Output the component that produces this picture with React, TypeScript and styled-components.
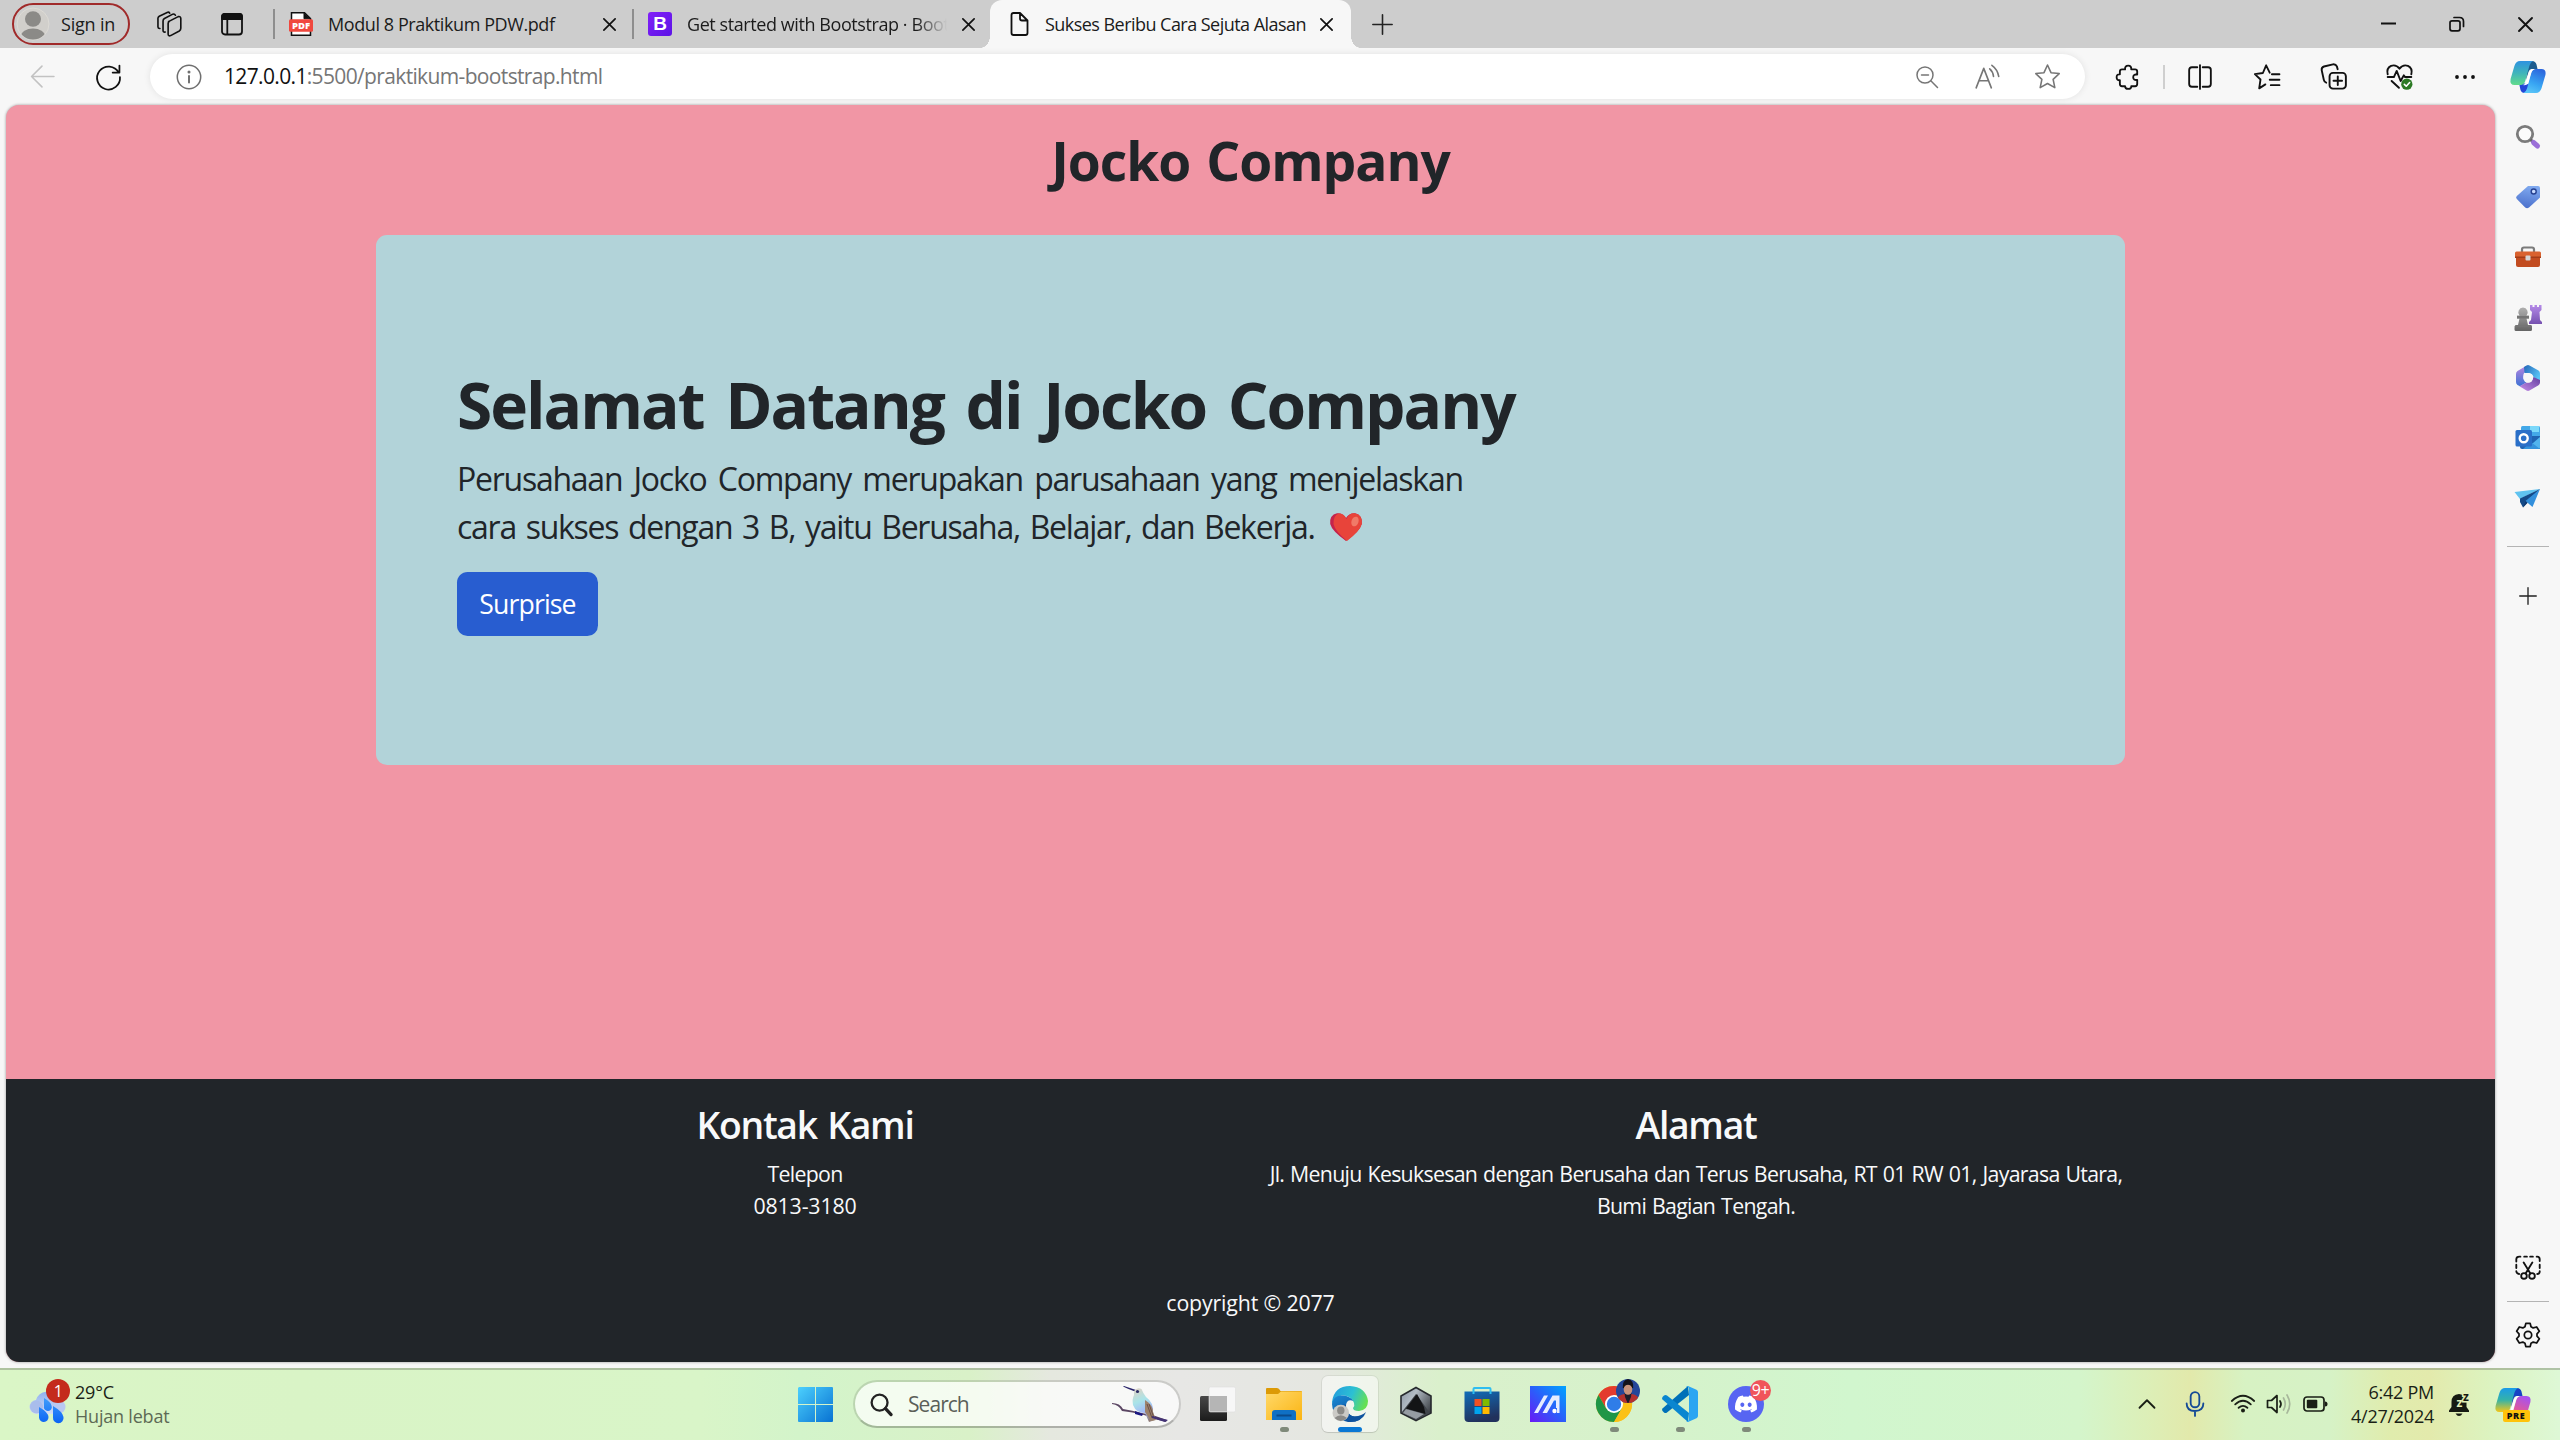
import React from 'react';
import styled, { createGlobalStyle } from 'styled-components';
import { FaDiscord } from 'react-icons/fa';

const Global = createGlobalStyle`
  * { box-sizing: border-box; }
  html, body { margin: 0; padding: 0; }
  body { font-family: "Open Sans", "Noto Sans", sans-serif; background: #f7f7f7; overflow: hidden; }
  svg { display: block; flex: none; overflow: visible; }
`;

/* ---------- window frame ---------- */
const Screen = styled.div`
  width: 2560px;
  height: 1440px;
  display: flex;
  flex-direction: column;
  overflow: hidden;
`;
const TabStrip = styled.div`
  height: 48px;
  flex: none;
  display: flex;
  align-items: center;
  background: #cdcdcd;
  color: #1b1b1b;
  font-size: 18px;
`;
const SignIn = styled.div`
  width: 118px;
  height: 42px;
  margin-left: 12px;
  display: flex;
  align-items: center;
  gap: 11px;
  padding-left: 2px;
  border: 2px solid #a02a2a;
  border-radius: 21px;
  letter-spacing: -0.2px;
  white-space: nowrap;
`;
const Slot = styled.div<{ $w: number; $h?: number; $ml?: number }>`
  width: ${p => p.$w}px;
  height: ${p => (p.$h ? p.$h + 'px' : 'auto')};
  margin-left: ${p => p.$ml || 0}px;
  flex: none;
  display: flex;
  align-items: center;
  justify-content: center;
`;
const Divider = styled.div<{ $h: number; $c: string }>`
  width: 2px;
  height: ${p => p.$h}px;
  flex: none;
  background: ${p => p.$c};
`;
const Tab = styled.div<{ $w: number; $pl: number; $pr: number; $gap: number; $active?: boolean }>`
  position: relative;
  width: ${p => p.$w}px;
  height: 48px;
  padding: 0 ${p => p.$pr}px 0 ${p => p.$pl}px;
  flex: none;
  display: flex;
  align-items: center;
  gap: ${p => p.$gap}px;
  background: ${p => (p.$active ? '#f7f7f7' : 'transparent')};
  border-radius: 12px 12px 0 0;
  ${p =>
    p.$active &&
    `&::before, &::after {
      content: ''; position: absolute; bottom: 0; width: 10px; height: 12px;
    }
    &::before { left: -10px; background: radial-gradient(ellipse 10px 12px at 0 0, transparent 98%, #f7f7f7 100%); }
    &::after { right: -10px; background: radial-gradient(ellipse 10px 12px at 100% 0, transparent 98%, #f7f7f7 100%); }`}
`;
const TabTitle = styled.span<{ $ls: number; $fade?: boolean }>`
  flex: 1;
  min-width: 0;
  padding-bottom: 1px;
  overflow: hidden;
  white-space: nowrap;
  letter-spacing: ${p => p.$ls}px;
  ${p => p.$fade && 'mask-image: linear-gradient(90deg, #000 88%, transparent 100%);'}
`;
const Favicon = styled.div`
  width: 24px;
  height: 24px;
  flex: none;
  display: flex;
  align-items: center;
  justify-content: center;
  border-radius: 3px;
  background: linear-gradient(135deg, #8220f8, #5c13e6);
  color: #fff;
  font: 700 19px/24px "Liberation Sans", Arial, sans-serif;
`;
const WindowButtons = styled.div`
  margin-left: auto;
  margin-right: 1px;
  display: flex;
`;

const Toolbar = styled.div`
  height: 57px;
  flex: none;
  display: flex;
  align-items: center;
  background: #f7f7f7;
`;
const AddressBar = styled.div`
  width: 1935px;
  height: 45px;
  margin-left: 9px;
  flex: none;
  display: flex;
  align-items: center;
  padding-right: 8px;
  border-radius: 23px;
  background: #fff;
  box-shadow: 0 0 7px rgba(0, 0, 0, 0.09);
`;
const Url = styled.div`
  flex: 1;
  margin-left: -4px;
  padding-bottom: 1px;
  font-size: 21px;
  letter-spacing: -0.65px;
  color: #767676;
  white-space: nowrap;
  b { font-weight: 400; color: #111; }
`;

const Body = styled.div`
  height: 1263px;
  flex: none;
  display: flex;
  background: #f7f7f7;
`;

/* ---------- web page ---------- */
const Page = styled.main`
  width: 2489px;
  height: 1257px;
  margin-left: 6px;
  flex: none;
  display: flex;
  flex-direction: column;
  align-items: center;
  overflow: hidden;
  border-radius: 13px;
  background: #f196a5;
  box-shadow: 0 0 3px rgba(0, 0, 0, 0.4);
`;
const Brand = styled.h1`
  margin: 24px 0 42px;
  font-size: 53.33px;
  line-height: 64px;
  font-weight: 700;
  letter-spacing: -1px;
  word-spacing: 3px;
  color: #212529;
`;
const Hero = styled.section`
  width: 1749px;
  height: 530px;
  flex: none;
  padding: 132px 80px 0 81px;
  display: flex;
  flex-direction: column;
  align-items: flex-start;
  border-radius: 11px;
  background: #b2d3d9;
  color: #212529;
`;
const HeroTitle = styled.h2`
  margin: 0 0 11px;
  font-size: 64px;
  line-height: 76.8px;
  font-weight: 700;
  letter-spacing: -2px;
  word-spacing: 7px;
  white-space: nowrap;
`;
const Lead = styled.p`
  margin: 0 0 21.4px;
  font-size: 32px;
  line-height: 48px;
  letter-spacing: -1.25px;
  white-space: nowrap;
`;
const LeadLine = styled.span<{ $ws: number }>`
  display: flex;
  align-items: center;
  gap: 14px;
  word-spacing: ${p => p.$ws}px;
`;
const HeroButton = styled.button`
  width: 141px;
  height: 64px;
  padding: 0;
  border: 0;
  border-radius: 10.6px;
  background: #285dd0;
  color: #fff;
  font: 400 26.67px/40px "Open Sans", sans-serif;
  letter-spacing: -0.9px;
`;
const Footer = styled.footer`
  width: 100%;
  height: 283px;
  margin-top: auto;
  flex: none;
  display: flex;
  flex-direction: column;
  align-items: center;
  padding-top: 23px;
  background: #212529;
  color: #f8f9fa;
  font-size: 21.33px;
  line-height: 32px;
`;
const Columns = styled.div`
  width: 1782px;
  display: grid;
  grid-template-columns: 1fr 1fr;
  text-align: center;
`;
const FootTitle = styled.h3`
  margin: 0 0 11px;
  font-size: 37.33px;
  line-height: 45px;
  font-weight: 600;
  letter-spacing: -1.3px;
  word-spacing: 2px;
`;
const FootLine = styled.div<{ $ls?: number }>`
  letter-spacing: ${p => p.$ls ?? -0.7}px;
  word-spacing: 1px;
  white-space: nowrap;
`;
const Copyright = styled.div`
  margin-top: 65px;
  letter-spacing: -0.15px;
`;

/* ---------- sidebar ---------- */
const Sidebar = styled.aside`
  flex: 1;
  display: flex;
  flex-direction: column;
  align-items: center;
  padding: 2px 0 1px;
`;
const Rule = styled.div<{ $mt: number }>`
  width: 42px;
  height: 1px;
  margin-top: ${p => p.$mt}px;
  flex: none;
  background: #b4b4b4;
`;
const Grow = styled.div`flex: 1;`;

/* ---------- taskbar ---------- */
const Taskbar = styled.div`
  height: 72px;
  flex: none;
  display: flex;
  align-items: center;
  padding-bottom: 2px;
  border-top: 2px solid rgba(120, 130, 110, 0.45);
  background-image: linear-gradient(90deg,
    #daf6c6 0, #d9f4c6 300px, #d9f5c8 700px, #d3f4ca 800px, #d9f1c8 970px, #e5e8df 1050px, #e7e7e5 1180px,
    #e5e7e1 1320px, #daf0cc 1440px, #d6f2cb 1650px, #d1f6ce 1850px, #d4f5cb 2080px, #dcefb8 2145px, #e2e9ab 2190px,
    #d7f2c3 2245px, #d6f2c6 2330px, #e0ecad 2390px, #e3eaac 2430px, #dcf3c0 2490px, #def8d6 2560px);
  background-origin: border-box;
`;
const Weather = styled.div`
  width: 798px;
  flex: none;
  display: flex;
  align-items: center;
  gap: 7px;
  padding-left: 28px;
`;
const WeatherText = styled.div`
  display: flex;
  flex-direction: column;
  font-size: 18px;
  line-height: 24.4px;
  letter-spacing: -0.2px;
  color: #1b1f18;
  span + span { color: #5d6a55; }
`;
const SearchBox = styled.div`
  width: 328px;
  height: 48px;
  margin: 0 4px 0 20px;
  flex: none;
  display: flex;
  align-items: center;
  padding: 0 10px 0 15px;
  border: 2px solid rgba(0, 0, 0, 0.12);
  border-bottom-color: rgba(0, 0, 0, 0.24);
  border-radius: 24px;
  background: rgba(255, 255, 255, 0.72);
  background-clip: padding-box;
`;
const SearchText = styled.span`
  flex: 1;
  margin-left: 15px;
  font-size: 21px;
  letter-spacing: -0.95px;
  color: #5b5f59;
`;
const AppTile = styled.div<{ $active?: boolean }>`
  width: 56px;
  height: 56px;
  margin: 0 5px;
  flex: none;
  display: grid;
  grid-template-rows: 46px 5px;
  justify-items: center;
  align-items: center;
  padding-top: 5px;
  border-radius: 6px;
  background: ${p => (p.$active ? 'rgba(255,255,255,0.5)' : 'transparent')};
  box-shadow: ${p => (p.$active ? '0 0 0 1px rgba(0,0,0,0.06), 0 1px 1px rgba(0,0,0,0.1)' : 'none')};
`;
const Indicator = styled.i<{ $on?: boolean }>`
  width: ${p => (p.$on ? 24 : 9)}px;
  height: 5px;
  border-radius: 3px;
  background: ${p => (p.$on ? '#0a78d4' : '#7f8a7a')};
`;
const IconWrap = styled.div<{ $up?: number }>`
  position: relative;
  display: flex;
  margin-bottom: ${p => p.$up || 0}px;
`;
const Badge = styled.span<{ $x: number; $y: number; $s: number; $c: string }>`
  position: absolute;
  left: ${p => p.$x}px;
  top: ${p => p.$y}px;
  width: ${p => p.$s}px;
  height: ${p => p.$s}px;
  border-radius: 50%;
  background: ${p => p.$c};
  color: #fff;
  font-size: 16px;
  line-height: ${p => p.$s}px;
  letter-spacing: -0.5px;
  text-align: center;
`;
const DiscordDisc = styled.div`
  width: 36px;
  height: 36px;
  display: flex;
  align-items: center;
  justify-content: center;
  border-radius: 50%;
  background: #5765f2;
  color: #fff;
  font-size: 24px;
`;
const Tray = styled.div`
  margin-left: auto;
  height: 70px;
  display: flex;
  align-items: center;
`;
const Clock = styled.div`
  width: 90px;
  margin-left: 4px;
  font-size: 18px;
  line-height: 24.5px;
  letter-spacing: -0.25px;
  text-align: right;
  color: #1a1f16;
`;

/* ---------- icons ---------- */
type LineProps = { s?: number; c?: string; w?: number; children: React.ReactNode };
const Ln = ({ s = 24, c = '#111', w = 1.6, children }: LineProps) => (
  <svg width={s} height={s} viewBox="0 0 24 24" fill="none" stroke={c} strokeWidth={w} strokeLinecap="round" strokeLinejoin="round">
    {children}
  </svg>
);
const Close = ({ s = 13, w = 1.7 }: { s?: number; w?: number }) => (
  <svg width={s} height={s} viewBox="0 0 12 12" stroke="#111" strokeWidth={(w * 12) / s} strokeLinecap="round"><path d="M.8.8l10.4 10.4M11.2.8L.8 11.2" /></svg>
);
const Avatar = () => (
  <svg width="34" height="34" viewBox="0 0 34 34">
    <defs><clipPath id="av"><circle cx="17" cy="17" r="15.5" /></clipPath></defs>
    <circle cx="17" cy="17" r="16" fill="#d1cfcb" stroke="#dddbd6" />
    <g fill="#8b8a87" clipPath="url(#av)"><ellipse cx="17" cy="12" rx="8" ry="7.8" /><ellipse cx="17" cy="29.5" rx="12" ry="8" /></g>
  </svg>
);
const Workspaces = () => (
  <Ln s={26} w={1.5}>
    <path d="M11.5 9.8L20.5 5.2Q22.8 4.6 22.9 7V16Q22.9 17.600 21.500 18.400L13.500 22.700Q11.300 23.500 11.200 21.200V11.600Q11.200 10.400 12.200 9.600Z" />
    <path d="M8.500 19.400Q6.600 19.800 6.500 18V9.200Q6.500 7.700 7.800 6.900L15.500 2.900Q17.200 2.300 17.900 3.900" />
    <path d="M3.600 16.200Q1.900 16.300 1.800 14.800V6.800Q1.800 5.500 3 4.800L10.300 1.300Q11.900.7 12.600 2" />
  </Ln>
);
const TabActions = () => (
  <Ln s={24} w={1.8}>
    <rect x="2" y="2" width="20" height="20.500" rx="3" />
    <path d="M2 4.500Q2 2 4.500 2H19.500Q22 2 22 4.500V7H2Z" fill="#111" /><path d="M7.300 7V22" />
  </Ln>
);
const PdfIcon = () => (
  <svg width="24" height="24" viewBox="0 0 24 24">
    <path d="M2.500.8H15.500L21.500 6.500V23.200H2.500Z" fill="#fff" stroke="#111" strokeWidth="1.500" /><path d="M15 .8V6.800H21.500" fill="#111" stroke="#111" />
    <rect x="0" y="7.200" width="24" height="12.600" rx="1.500" fill="#f0483e" />
    <text x="12" y="17" textAnchor="middle" fontFamily="Open Sans, sans-serif" fontWeight="800" fontSize="9.500" fill="#fff">PDF</text>
  </svg>
);
const PageIcon = () => (
  <Ln s={24} w={1.8}><path d="M4.500 3Q4.500 1 6.500 1H13L20.500 8.500V21Q20.500 23 18.500 23H6.500Q4.500 23 4.500 21ZM13 1V6.500Q13 8.500 15 8.500H20.500" /></Ln>
);
const Star = ({ c = '#767676' }: { c?: string }) => (
  <Ln s={27} c={c} w={1.400}><path d="M12 1.800L15.100 8.600L22.400 9.400L17 14.500L18.500 21.900L12 18.200L5.500 21.900L7 14.500L1.600 9.400L8.900 8.600Z" /></Ln>
);
const CopilotIcon = ({ pre }: { pre?: boolean }) => {
  const k = pre ? 'p' : 'c';
  return (
    <svg width="36" height="34" viewBox="0 0 36 34">
      <defs>
        <linearGradient id={k + '1'} x1="0" y1="0" x2="0" y2="1"><stop stopColor={pre ? '#1b9be8' : '#2e92e0'} /><stop offset=".5" stopColor={pre ? '#35b3a8' : '#3fb4bb'} /><stop offset="1" stopColor={pre ? '#f4c619' : '#62dc8c'} /></linearGradient>
        <linearGradient id={k + '2'} x1=".7" y1="0" x2=".3" y2="1"><stop stopColor={pre ? '#a552f0' : '#2b66dd'} /><stop offset=".6" stopColor={pre ? '#e0599c' : '#38a5f3'} /><stop offset="1" stopColor={pre ? '#ff9452' : '#5bc6f8'} /></linearGradient>
      </defs>
      <path d="M18 1H22Q25.500 1 26.500 4.500L27.500 9H22Q19.500 9 18.500 12L16 20Z" fill={pre ? '#1744c4' : '#1c5b8e'} />
      <path d="M9 23L10.500 30Q11.500 33 14.500 33H18L20 24Z" fill={pre ? '#f5824f' : '#2348d8'} />
      <path d="M10 1H23Q20.500 2 19.500 5.500L15.500 20Q14.500 24.500 11 25H4.500Q-.5 25 .6 19L4.400 6Q6 1 10 1Z" fill={`url(#${k}1)`} />
      <path d="M26 33H13.500Q16 32 17 28.500L21 14Q22 9.500 25.500 9H31.500Q36.500 9 35.400 15L31.600 28Q30 33 26 33Z" fill={`url(#${k}2)`} />
      <path d="M22 9Q19.500 10 18.800 12.500L15.500 23Q14.500 25 12.500 25Q16.500 25.500 17.800 24L21 13Q21.800 10 24.500 9Z" fill="#fff" />
    </svg>
  );
};

const SearchSide = () => (
  <svg width="26" height="26" viewBox="0 0 26 26"><circle cx="10" cy="10" r="7.700" fill="#fff" fillOpacity=".5" stroke="#7b7b7b" strokeWidth="2.800" /><path d="M15.500 15.500L18 18" stroke="#666" strokeWidth="3" /><path d="M18.500 18.500L22.500 22" stroke="#9b6fd8" strokeWidth="5" strokeLinecap="round" /></svg>
);
const TagSide = () => (
  <svg width="26" height="26" viewBox="0 0 26 26"><defs><linearGradient id="tag" x1=".6" y1="0" x2=".4" y2="1"><stop stopColor="#80aaf0" /><stop offset="1" stopColor="#4b70cc" /></linearGradient></defs><path d="M13 2H23Q25 2 25 4V13.500L14 23.500Q12 25 10.200 23.500L1.800 15Q.3 13.400 1.800 12Z" fill="url(#tag)" /><circle cx="18.700" cy="7.500" r="2.500" fill="#c9dbff" stroke="#274291" strokeWidth="1.400" /></svg>
);
const ToolboxSide = () => (
  <svg width="28" height="24" viewBox="0 0 28 24"><path d="M8 7V4.500Q8 2.500 10 2.500H18Q20 2.500 20 4.500V7" fill="none" stroke="#7b7b7b" strokeWidth="2.200" /><rect x="2" y="10" width="24" height="12" rx="2" fill="#c24c20" /><path d="M1 8Q1 6.500 2.500 6.500H25.500Q27 6.500 27 8V12H1Z" fill="#d9622f" /><rect x="1" y="11.500" width="26" height="1.500" fill="#a33c18" /><rect x="11.500" y="10.500" width="5" height="5" rx="1" fill="#d5d5d5" /></svg>
);
const ChessSide = () => (
  <svg width="28" height="28" viewBox="0 0 28 28"><defs><linearGradient id="rk" x1="0" y1="0" x2="0" y2="1"><stop stopColor="#b58ae8" /><stop offset="1" stopColor="#7652b0" /></linearGradient><linearGradient id="pn" x1="0" y1="0" x2="0" y2="1"><stop stopColor="#b0b0b0" /><stop offset="1" stopColor="#646464" /></linearGradient></defs><path d="M16 1H18.500V3H20.500V1H23V3H25V1H27.500V6L25.500 8L26 16L28 18V20H15V18L17 16L18 8L16 6Z" fill="url(#rk)" /><path d="M9 3.500A4.800 4.800 0 0 1 12.500 11.500H15V14.500H12.500L14 21H16.500Q18 21 18 24V25.500Q18 27 16.500 27H2Q.5 27 .5 25.500V24Q.5 21 2.500 21H4L5.500 14.500H3V11.500H5.500A4.800 4.800 0 0 1 9 3.500Z" fill="url(#pn)" /><path d="M3 12H15V14.500H3ZM.5 23Q1 21 3 21H16Q18 21 18 23Z" fill="#757575" /></svg>
);
const M365Side = () => (
  <svg width="26" height="28" viewBox="0 0 26 28"><defs><linearGradient id="m1" x1="0" y1="0" x2="0" y2="1"><stop stopColor="#b785df" /><stop offset="1" stopColor="#3d72d4" /></linearGradient><linearGradient id="m2" x1="0" y1="0" x2="1" y2=".6"><stop stopColor="#2466b8" /><stop offset="1" stopColor="#59c5f6" /></linearGradient><linearGradient id="m3" x1="0" y1="1" x2="1" y2="0"><stop stopColor="#c58ce8" /><stop offset="1" stopColor="#6540a0" /></linearGradient></defs><path d="M11 2L2.500 7Q1 8 1 10V18Q1 20 2.500 21L5 22.300L11.500 18.500L8.500 15Q7.500 10 10 8Z" fill="url(#m1)" /><path d="M9 3L11.500 1.400Q13 .6 14.500 1.400L23.500 6.600Q25 7.500 25 9.500V18L18.500 13Q17.500 9.500 14 9H9.500Z" fill="url(#m2)" /><path d="M18.500 13L25 16V18.500Q25 20.300 23.500 21.200L14.500 26.500Q13 27.300 11.500 26.500L4.500 22.300L11.500 18.500Q17 19 18.500 13Z" fill="url(#m3)" /><circle cx="13.200" cy="14" r="4.800" fill="#f7f7f7" /></svg>
);
const OutlookSide = () => (
  <svg width="26" height="26" viewBox="0 0 26 26"><rect x="6" y="1" width="19" height="14" rx="1.500" fill="#43a8e8" /><rect x="15" y="1" width="9" height="6" fill="#7bd8fa" /><path d="M5 11H25V24H7Q5 24 5 22Z" fill="#1f63b2" /><path d="M25 12L11 24H23.500Q25 24 25 22.500Z" fill="#52b4ee" /><path d="M16 17L25 24H8Z" fill="#3593dc" /><rect x=".5" y="5" width="16.500" height="16.500" rx="1.500" fill="#2a6fc8" /><circle cx="8.700" cy="13.200" r="4" fill="none" stroke="#fff" strokeWidth="2.400" /></svg>
);
const DropSide = () => (
  <svg width="27" height="24" viewBox="0 0 27 24"><path d="M.5 6L26 3L6 13Z" fill="#5fc3f0" /><path d="M26 3L6 12.500V16L9 21.500L13 17Z" fill="#144a88" /><path d="M26 3L11.500 15L18.500 21Z" fill="#3390dc" /><path d="M11.500 15L9 21.500L13.500 17Z" fill="#123c70" /></svg>
);
const sideIcons = [SearchSide, TagSide, ToolboxSide, ChessSide, M365Side, OutlookSide, DropSide];

const Plus = ({ s = 21 }: { s?: number }) => (
  <svg width={s} height={s} viewBox="0 0 20 20" stroke="#222" strokeWidth="1.500" strokeLinecap="round"><path d="M10 .8V19.200M.8 10H19.200" /></svg>
);

const WeatherIcon = () => (
  <IconWrap $up={5}>
    <svg width="40" height="48" viewBox="0 0 40 48">
      <defs><linearGradient id="cl" x1="0" y1="0" x2="0" y2="1"><stop stopColor="#8fb1ef" /><stop offset="1" stopColor="#d5ddf5" /></linearGradient><linearGradient id="dr" x1="0" y1="0" x2="0" y2="1"><stop stopColor="#3f9dfb" /><stop offset="1" stopColor="#0b64f4" /></linearGradient></defs>
      <path d="M9 36A7 7 0 0 1 8 22A11 11 0 0 1 29 21A7.600 7.600 0 0 1 31 36Z" fill="url(#cl)" />
      <circle cx="8.500" cy="29" r="6.500" fill="#a9bdec" /><circle cx="31" cy="29" r="6.500" fill="#b9c8f1" />
      <path d="M16 20Q23 24 23.500 27.500A4 4 0 1 1 16 28ZM11 29Q20 34 20.500 39A4.700 4.700 0 1 1 11 39.500ZM25 28Q35 34 35.500 39A5.300 5.300 0 1 1 25 39.500Z" fill="url(#dr)" />
    </svg>
    <Badge $x={18} $y={1} $s={24} $c="#c42b1c">1</Badge>
  </IconWrap>
);
const WindowsLogo = () => (
  <svg width="35" height="35" viewBox="0 0 35 35"><defs><linearGradient id="wn" x1="0" y1="0" x2="1" y2="1"><stop stopColor="#4cd0fd" /><stop offset="1" stopColor="#0872d2" /></linearGradient></defs><path d="M1 0H17V17H0V1ZM18 0H34Q35 0 35 1V17H18ZM0 18H17V35H1Q0 35 0 34ZM18 18H35V34Q35 35 34 35H18Z" fill="url(#wn)" /></svg>
);
const Bird = () => (
  <svg width="57" height="38" viewBox="0 0 57 38">
    <defs><linearGradient id="bd" x1=".3" y1="0" x2=".6" y2="1"><stop stopColor="#d9d4c8" /><stop offset=".35" stopColor="#a9e4e8" /><stop offset=".7" stopColor="#a3b8f7" /><stop offset="1" stopColor="#8f7b78" /></linearGradient></defs>
    <path d="M0 18Q8 18 11 24Q20 25.500 30 28Q42 30 55 35L54 37Q42 34 32 30Q20 27 10 26Q7 20 0 19Z" fill="#5b4663" />
    <path d="M12 1L24 5L23 6.500Q17 4.500 11 1.500Z" fill="#29246a" />
    <path d="M22 6Q25 2 29.500 4Q31 8 34 12Q42 18 41 27L43 35L37 37L33 28Q24 28 21 20Q20 14 22 10Z" fill="url(#bd)" />
    <path d="M33 15Q41 20 41 27L44 35L39 36L33 27Z" fill="#9c826c" /><path d="M35 19L40 33M37 19L42 33" stroke="#6b4f48" strokeWidth="1" />
    <circle cx="25.500" cy="6.500" r="1.600" fill="#2c2b62" /><path d="M23 26L31 29L30 31L23 29Z" fill="#1a1782" /><path d="M40 31L56 35L53 37L40 33Z" fill="#433276" />
  </svg>
);
const TaskView = () => (
  <svg width="36" height="36" viewBox="0 0 36 36"><defs><linearGradient id="tv" x1="0" y1="0" x2="0" y2="1"><stop stopColor="#484848" /><stop offset="1" stopColor="#1b1b1b" /></linearGradient></defs><rect x="0" y="10" width="27" height="25" rx="1.500" fill="url(#tv)" /><rect x="9" y="1" width="26.500" height="25" rx="1.500" fill="#f8f8f8" fillOpacity=".95" stroke="#ddd" strokeWidth=".6" /><rect x="9.500" y="10" width="17.500" height="15.500" fill="#b5b5b5" /></svg>
);
const Explorer = () => (
  <svg width="36" height="36" viewBox="0 0 36 36"><defs><linearGradient id="fo" x1="0" y1="0" x2="1" y2="1"><stop stopColor="#ffd96a" /><stop offset="1" stopColor="#fbb412" /></linearGradient></defs><path d="M0 3Q0 2 1 2H11Q13 2 14.500 5H35Q36 5 36 6V12H0Z" fill="#dc9a06" /><path d="M0 8H12L15 5.500H36V34H0Z" fill="url(#fo)" /><path d="M6 34V27Q6 24 9 24H27Q30 24 30 27V34Z" fill="#0f70c4" /><rect x="10.500" y="28.500" width="15" height="2" fill="#0b4a8a" /></svg>
);
const Edge = () => (
  <svg width="36" height="36" viewBox="0 0 36 36">
    <defs><linearGradient id="e1" x1="0" y1=".2" x2="1" y2=".5"><stop stopColor="#239ddd" /><stop offset=".55" stopColor="#2cc0d3" /><stop offset="1" stopColor="#66e052" /></linearGradient><linearGradient id="e2" x1="0" y1="0" x2=".6" y2="1"><stop stopColor="#1a8ad5" /><stop offset="1" stopColor="#0c4d9b" /></linearGradient></defs>
    <path d="M0 16Q2 0 18 0Q34 1 36 15Q36 24 27 25Q21 25 21 22Q23 20 22 17Q19 9 10 9.500Q3 11 0 18Z" fill="url(#e1)" />
    <path d="M0 18Q1 9 11 9.500Q18 10 21.500 15Q15 12.500 14 19Q13 27 22 31Q29 33 34 27Q28 37 16 36Q1 33 0 18Z" fill="url(#e2)" />
    <path d="M14 19Q12 26 20 30Q29 31 34 26Q30 36 18 36Q8 33 9 24Q10 17 14 19Z" fill="#0e529e" />
    <circle cx="8.800" cy="27" r="8.300" fill="#cbcac6" /><ellipse cx="8.800" cy="24.600" rx="3.700" ry="4" fill="#8b8a87" /><path d="M2.500 32Q8.800 26.500 15 32Q8.800 38 2.500 32Z" fill="#8b8a87" />
  </svg>
);
const Cube = () => (
  <svg width="36" height="36" viewBox="0 0 36 36"><defs><linearGradient id="cu" x1="0" y1="0" x2="1" y2=".7"><stop stopColor="#8793a0" /><stop offset=".4" stopColor="#b3bcc5" /><stop offset="1" stopColor="#3c4045" /></linearGradient></defs><path d="M18 1.500L33 10V27L18 34.500L3 27V10Z" fill="url(#cu)" stroke="#26292d" strokeWidth="1.600" /><path d="M3.500 26.500L18 8L32 27L18 34Z" fill="#40454b" /><path d="M19 8L26 21L27.500 28L8 22.500Z" fill="#131416" /><path d="M8 23L26 28L18 33L5 27Z" fill="#969ca3" /></svg>
);
const Store = () => (
  <svg width="36" height="36" viewBox="0 0 36 36"><defs><linearGradient id="st" x1="0" y1="0" x2=".3" y2="1"><stop stopColor="#106db9" /><stop offset="1" stopColor="#21315c" /></linearGradient></defs><path d="M.5 5.500H35.500V32Q35.500 36 31.500 36H4.500Q.5 36 .5 32Z" fill="url(#st)" /><path d="M9.500 8V3Q9.500 2 10.500 2H25.500Q26.500 2 26.500 3V8" fill="none" stroke="#2fbdf0" strokeWidth="2" /><rect x="10.500" y="13" width="7" height="7" fill="#f25022" /><rect x="18.500" y="13" width="7" height="7" fill="#7fba00" /><rect x="10.500" y="21" width="7" height="7" fill="#00a4ef" /><rect x="18.500" y="21" width="7" height="7" fill="#ffb900" /></svg>
);
const MyAsus = () => (
  <svg width="36" height="36" viewBox="0 0 36 36"><defs><linearGradient id="ma" x1="1" y1="0" x2="0" y2="1"><stop stopColor="#00a3ff" /><stop offset=".5" stopColor="#2a5ffa" /><stop offset="1" stopColor="#6a18f5" /></linearGradient></defs><rect width="36" height="36" fill="url(#ma)" /><path d="M4 27L14 9.500H18L8 27ZM12.500 27L22.500 9.500H29.500V22H26V14.500L24 14.500L17 27Z" fill="#e6ecff" /><circle cx="24.500" cy="25" r="2.200" fill="#fff" /><path d="M27 22H29.500V27H27Z" fill="#e6ecff" /></svg>
);
const Chrome = () => (
  <svg width="36" height="36" viewBox="0 0 36 36">
    <circle cx="18" cy="18" r="18" fill="#fbc116" />
    <path d="M18 9H33.600A18 18 0 0 0 2.400 9L10.200 22.500L18 18Z" fill="#e33b2e" />
    <path d="M2.400 9A18 18 0 0 0 18 36L25.800 22.500L10.200 22.500Z" fill="#1f9647" />
    <path d="M33.600 9A18 18 0 0 1 18 36L25.800 22.500L18 9Z" fill="#fbc116" />
    <circle cx="18" cy="18" r="9" fill="#fff" /><circle cx="18" cy="18" r="7.200" fill="#2f7de8" />
    <defs><clipPath id="pf"><circle cx="32" cy="5" r="12" /></clipPath></defs>
    <g clipPath="url(#pf)"><rect x="19" y="-8" width="26" height="26" fill="#24469a" /><path d="M19 18Q21 9 28 8H36Q43 9 45 18Z" fill="#b3302f" /><path d="M28.500 7H35.500L35 11L32 18L29 11Z" fill="#1b1d2b" /><path d="M26.800 2Q26-6 32-7Q38-6 37.200 2Z" fill="#14131c" /><ellipse cx="32" cy="3.500" rx="4.300" ry="5.200" fill="#c8927b" /><path d="M27.300 1.500Q27-4 32-5Q37-4 36.700 1.500Q35-1.500 32-1.200Q29-1.500 27.300 1.500Z" fill="#14131c" /></g>
  </svg>
);
const VsCode = () => (
  <svg width="36" height="36" viewBox="0 0 36 36"><path d="M26 0L27 9L5 26.500Q3.500 27.500 2 26.500L.5 25Q-.5 23.500.5 22.500Z" fill="#0070b8" /><path d="M26 36L27 27L5 9.500Q3.500 8.500 2 9.500L.5 11Q-.5 12.500.5 13.500Z" fill="#0a86d0" /><path d="M26 0L34.500 3.800Q36 4.600 36 6V30Q36 31.400 34.500 32.200L26 36Q24.500 36 24 35Q27 36 27 32V4Q27 0 24 1Q24.500 0 26 0Z" fill="#2ba5f2" /></svg>
);
const Wifi = () => (
  <svg width="26" height="20" viewBox="0 0 26 20" fill="none" stroke="#1a1f16" strokeWidth="1.800" strokeLinecap="round"><path d="M1.800 7Q13-3.500 24.200 7M5.200 10.400Q13 3.200 20.800 10.400M8.600 13.800Q13 10 17.400 13.800" /><circle cx="13" cy="16.500" r="1.100" fill="#1a1f16" /></svg>
);
const Speaker = () => (
  <svg width="26" height="22" viewBox="0 0 26 22" fill="none" stroke="#1a1f16" strokeWidth="1.700" strokeLinecap="round" strokeLinejoin="round"><path d="M1.500 7.500V14.500H5.500L11 19.500V2.500L5.500 7.500Z" /><path d="M14 8Q16 11 14 14" /><path d="M17.500 5Q21 11 17.500 17M21 2Q26.500 11 21 20" stroke="#a7b79b" /></svg>
);
const Battery = () => (
  <svg width="25" height="18" viewBox="0 0 25 18"><rect x="1" y="2" width="20" height="14" rx="3" fill="none" stroke="#1a1f16" strokeWidth="1.700" /><rect x="3.800" y="4.800" width="10.500" height="8.400" rx="1" fill="#1a1f16" /><path d="M22 6.500Q24.500 6.500 24.500 9Q24.500 11.500 22 11.500Z" fill="#1a1f16" /></svg>
);
const Bell = () => (
  <svg width="20" height="26" viewBox="0 0 20 26" fontFamily="Open Sans, sans-serif" fontSize="12" fontWeight="700" fill="#161a12">
    <path d="M10 3Q2.500 3.500 2.500 11V16L0 19.500V21H20V19.500L17.500 16V11Q17.500 3.500 10 3Z" />
    <path d="M6.500 22.500H13.500Q12 25 10 25Q8 25 6.500 22.500Z" />
    <text x="14" y="9.500" stroke="#e2efb6" strokeWidth="3" paintOrder="stroke">z</text>
    <text x="7.500" y="16" fill="#e6f0b8">z</text>
  </svg>
);
const PreTag = styled.span`
  position: absolute;
  left: 8px;
  top: 23px;
  width: 27px;
  height: 12px;
  border-radius: 2px;
  background: #ffc20a;
  color: #111;
  font-size: 9px;
  font-weight: 800;
  line-height: 12px;
  text-align: center;
  letter-spacing: 0.6px;
`;

export default function App() {
  return (
    <Screen>
      <Global />
      <TabStrip>
        <SignIn><Avatar />Sign in</SignIn>
        <Slot $w={52} $ml={13}><Workspaces /></Slot>
        <Slot $w={52} $ml={11}><TabActions /></Slot>
        <Slot $w={15} />
        <Divider $h={30} $c="#8e8e8e" />
        <Tab $w={357} $pl={14} $pr={16} $gap={15}>
          <PdfIcon /><TabTitle $ls={-0.42}>Modul 8 Praktikum PDW.pdf</TabTitle><Close />
        </Tab>
        <Divider $h={30} $c="#8e8e8e" />
        <Tab $w={356} $pl={14} $pr={15} $gap={15}>
          <Favicon>B</Favicon><TabTitle $ls={-0.42} $fade>Get started with Bootstrap · Bootstrap v5.3</TabTitle><Close />
        </Tab>
        <Tab $w={361} $pl={17} $pr={18} $gap={14} $active>
          <PageIcon /><TabTitle $ls={-0.54}>Sukses Beribu Cara Sejuta Alasan</TabTitle><Close />
        </Tab>
        <Slot $w={62}><Plus /></Slot>
        <WindowButtons>
          <Slot $w={68}><svg width="15" height="4" viewBox="0 0 15 4"><rect y="0.500" width="15" height="2" fill="#111" /></svg></Slot>
          <Slot $w={69}>
            <svg width="16" height="16" viewBox="0 0 16 16" fill="none" stroke="#111" strokeWidth="1.700"><rect x="1" y="4.800" width="10" height="10" rx="2" /><path d="M5 1.500H10.500Q14.500 1.500 14.500 5.500V10.500" strokeLinecap="round" /></svg>
          </Slot>
          <Slot $w={68}><Close s={15} w={1.9} /></Slot>
        </WindowButtons>
      </TabStrip>

      <Toolbar>
        <Slot $w={66} $ml={9}><Ln s={25} c="#c2c2c2" w={1.5}><path d="M23 12H1.500M11.500 2L1.500 12L11.500 22" /></Ln></Slot>
        <Slot $w={66}>
          <Ln s={25} w={1.700}><path d="M21.700 8.200A11 11 0 1 0 23 12.500M22.500 1.500V8.200H16" /></Ln>
        </Slot>
        <AddressBar>
          <Slot $w={78}><Ln s={26} c="#6f6f6f" w={1.400}><circle cx="12" cy="12" r="10.800" /><path d="M12 11V17" strokeWidth="1.800" /><circle cx="12" cy="7.400" r=".7" fill="#6f6f6f" /></Ln></Slot>
          <Url><b>127.0.0.1</b>:5500/praktikum-bootstrap.html</Url>
          <Slot $w={60}><Ln s={24} c="#767676" w={1.500}><circle cx="10" cy="10" r="8" /><path d="M6.500 10H13.500M15.800 15.800L22.500 22.500" /></Ln></Slot>
          <Slot $w={60}><Ln s={26} c="#767676" w={1.500}><path d="M2 22L9 4L16 22M4.500 15.500H13.500" /><path d="M14.500 4.500Q17.500 7 18 11.500M16.500 1.200Q21.800 5 22.800 11.500" /></Ln></Slot>
          <Slot $w={60}><Star /></Slot>
        </AddressBar>
        <Slot $w={66} $ml={10}>
          <Ln s={26} w={1.700}><path d="M4.500 7Q4.500 5 6.500 5H9.300Q9 1.500 12.200 1.500Q15.300 1.500 15 5H18.500Q20.500 5 20.500 7V9.800Q16.800 9.200 16.800 12.200Q16.800 15.200 20.500 14.700V18.500Q20.500 20.500 18.500 20.500H15Q15.300 23 12.200 23Q9.300 23 9.300 20.500H6.500Q4.500 20.500 4.500 18.500V15Q1.500 15.200 1.500 12.200Q1.500 9.200 4.500 9.600Z" /></Ln>
        </Slot>
        <Slot $w={5}><Divider $h={24} $c="#cfcfcf" /></Slot>
        <Slot $w={68}><Ln s={26} w={1.700}><path d="M9.500 3H4.500Q2 3 2 5.500V18.500Q2 21 4.500 21H9.500M14.500 3H19.500Q22 3 22 5.500V18.500Q22 21 19.500 21H14.500M12 1V23" /></Ln></Slot>
        <Slot $w={66}><Ln s={26} w={1.700}><path d="M14.500 8L11.200 1.200L8.200 8.300L.8 9.300L6 14.300L4.800 22.500L10.500 18.800M16.500 9.500H23.500M14.500 14.500H23.500M15.500 19.500H23.500" /></Ln></Slot>
        <Slot $w={66}><Ln s={27} w={1.700}><rect x="8.500" y="8.800" width="14.500" height="14" rx="3" /><path d="M15.800 12V19.600M12 15.800H19.600M5.500 17.500Q3.800 17 3.400 15L1.500 6.300Q1.200 3.800 3.500 3.100L11.500 1.200Q14 .9 15 3L15.700 5.500" /></Ln></Slot>
        <Slot $w={66}>
          <Ln s={27} w={1.700}><path d="M1.500 10Q.2 4.500 4.500 2.500Q9 1 12 5Q15 1 19.500 2.500Q23.800 4.500 22.500 10M1.500 12.500H7L9.500 7L13 16L15.800 11L17 12.500H22.500M5 16L11.500 22" /><circle cx="18.500" cy="18.800" r="5" fill="#2c7a24" stroke="none" /><path d="M16.300 19L18 20.700L21 17.300" stroke="#fff" strokeWidth="1.400" /></Ln>
        </Slot>
        <Slot $w={66}><Ln s={24} w={0}><g fill="#111" stroke="none"><circle cx="4" cy="12" r="1.900" /><circle cx="12" cy="12" r="1.900" /><circle cx="20" cy="12" r="1.900" /></g></Ln></Slot>
        <Slot $w={60}><CopilotIcon /></Slot>
      </Toolbar>

      <Body>
        <Page>
          <Brand>Jocko Company</Brand>
          <Hero>
            <HeroTitle>Selamat Datang di Jocko Company</HeroTitle>
            <Lead>
              <LeadLine $ws={4.2}>Perusahaan Jocko Company merupakan parusahaan yang menjelaskan</LeadLine>
              <LeadLine $ws={2.6}>
                cara sukses dengan 3 B, yaitu Berusaha, Belajar, dan Bekerja.
                <svg width="34" height="30" viewBox="0 0 34 30"><path d="M17 29Q3 19 1.200 12Q.2 3 8 1.200Q14 .8 17 6Q20 .8 26 1.200Q33.800 3 32.800 12Q31 19 17 29Z" fill="#c5234b" /><path d="M18 29Q6 19 4.500 12Q4 4 9.500 1.600Q15 1.500 17.500 7Q20 .8 26 1.200Q33.800 3 32.800 12Q31 19 18 29Z" fill="#e8443a" /><ellipse cx="26" cy="9.500" rx="3.500" ry="5" transform="rotate(20 26 9.500)" fill="#f07a68" /></svg>
              </LeadLine>
            </Lead>
            <HeroButton>Surprise</HeroButton>
          </Hero>
          <Footer>
            <Columns>
              <div>
                <FootTitle>Kontak Kami</FootTitle>
                <FootLine>Telepon</FootLine>
                <FootLine $ls={-0.15}>0813-3180</FootLine>
              </div>
              <div>
                <FootTitle>Alamat</FootTitle>
                <FootLine>Jl. Menuju Kesuksesan dengan Berusaha dan Terus Berusaha, RT 01 RW 01, Jayarasa Utara,</FootLine>
                <FootLine>Bumi Bagian Tengah.</FootLine>
              </div>
            </Columns>
            <Copyright>copyright © 2077</Copyright>
          </Footer>
        </Page>
        <Sidebar>
          {sideIcons.map((Icon, i) => (
            <Slot key={i} $w={65} $h={60.2}><Icon /></Slot>
          ))}
          <Rule $mt={18} />
          <Slot $w={65} $h={97}><Plus s={18} /></Slot>
          <Grow />
          <Slot $w={65} $h={67}>
            <Ln s={26} w={1.700}><path d="M1.200 6V4Q1.200 1.500 4 1.500H5M8.500 1.500H11M14 1.500H16.500M20 1.500H20.500Q22.800 1.500 22.800 4V5.500M22.800 9V12M22.800 15V15.500Q22.500 17.500 20.500 17.500M1.200 9V12M1.200 15Q1.500 17.300 3.800 17.500" /><path d="M8 7L14.200 17M16 7L9.800 17" /><circle cx="8.300" cy="19.300" r="2.600" /><circle cx="15.700" cy="19.300" r="2.600" /></Ln>
          </Slot>
          <Rule $mt={0} />
          <Slot $w={65} $h={65}>
            <Ln s={26} w={1.600}><circle cx="12" cy="12" r="3.400" /><path d="M10 1.300L14 1.300L14.800 4.400L16.800 5.500L20 4.600L22.500 8.500L20.300 11L20.300 13L22.500 15.500L20 19.400L16.800 18.500L14.800 19.600L14 22.700L10 22.700L9.200 19.600L7.200 18.500L4 19.400L1.500 15.500L3.700 13L3.700 11L1.500 8.500L4 4.600L7.200 5.500L9.200 4.400Z" /></Ln>
          </Slot>
        </Sidebar>
      </Body>

      <Taskbar>
        <Weather>
          <WeatherIcon />
          <WeatherText><span>29°C</span><span>Hujan lebat</span></WeatherText>
        </Weather>
        <WindowsLogo />
        <SearchBox>
          <Ln s={23} c="#222" w={2.400}><circle cx="10" cy="10" r="8.300" /><path d="M16.200 16.200L22 22.500" strokeWidth="3.400" /></Ln>
          <SearchText>Search</SearchText>
          <Bird />
        </SearchBox>
        <AppTile><TaskView /></AppTile>
        <AppTile><Explorer /><Indicator /></AppTile>
        <AppTile $active><Edge /><Indicator $on /></AppTile>
        <AppTile><Cube /></AppTile>
        <AppTile><Store /></AppTile>
        <AppTile><MyAsus /></AppTile>
        <AppTile><Chrome /><Indicator /></AppTile>
        <AppTile><VsCode /><Indicator /></AppTile>
        <AppTile>
          <IconWrap><DiscordDisc><FaDiscord /></DiscordDisc><Badge $x={22} $y={-6} $s={21} $c="#f0555a">9+</Badge></IconWrap>
          <Indicator />
        </AppTile>
        <Tray>
          <Slot $w={48}><Ln s={20} c="#1a1f16" w={2.200}><path d="M3 16.500L12 7.500L21 16.500" /></Ln></Slot>
          <Slot $w={48}><Ln s={26} c="#144a96" w={1.700}><rect x="8" y="1" width="8" height="14" rx="4" /><path d="M4.300 11.500Q4.300 18.500 12 18.500Q19.700 18.500 19.700 11.500M12 18.500V23" /></Ln></Slot>
          <Slot $w={48}><Wifi /></Slot>
          <Slot $w={24}><Speaker /></Slot>
          <Slot $w={49}><Battery /></Slot>
          <Clock>6:42 PM<br />4/27/2024</Clock>
          <Slot $w={50}><Bell /></Slot>
          <Slot $w={57}>
            <IconWrap><CopilotIcon pre /><PreTag>PRE</PreTag></IconWrap>
          </Slot>
          <Slot $w={19} />
        </Tray>
      </Taskbar>
    </Screen>
  );
}
